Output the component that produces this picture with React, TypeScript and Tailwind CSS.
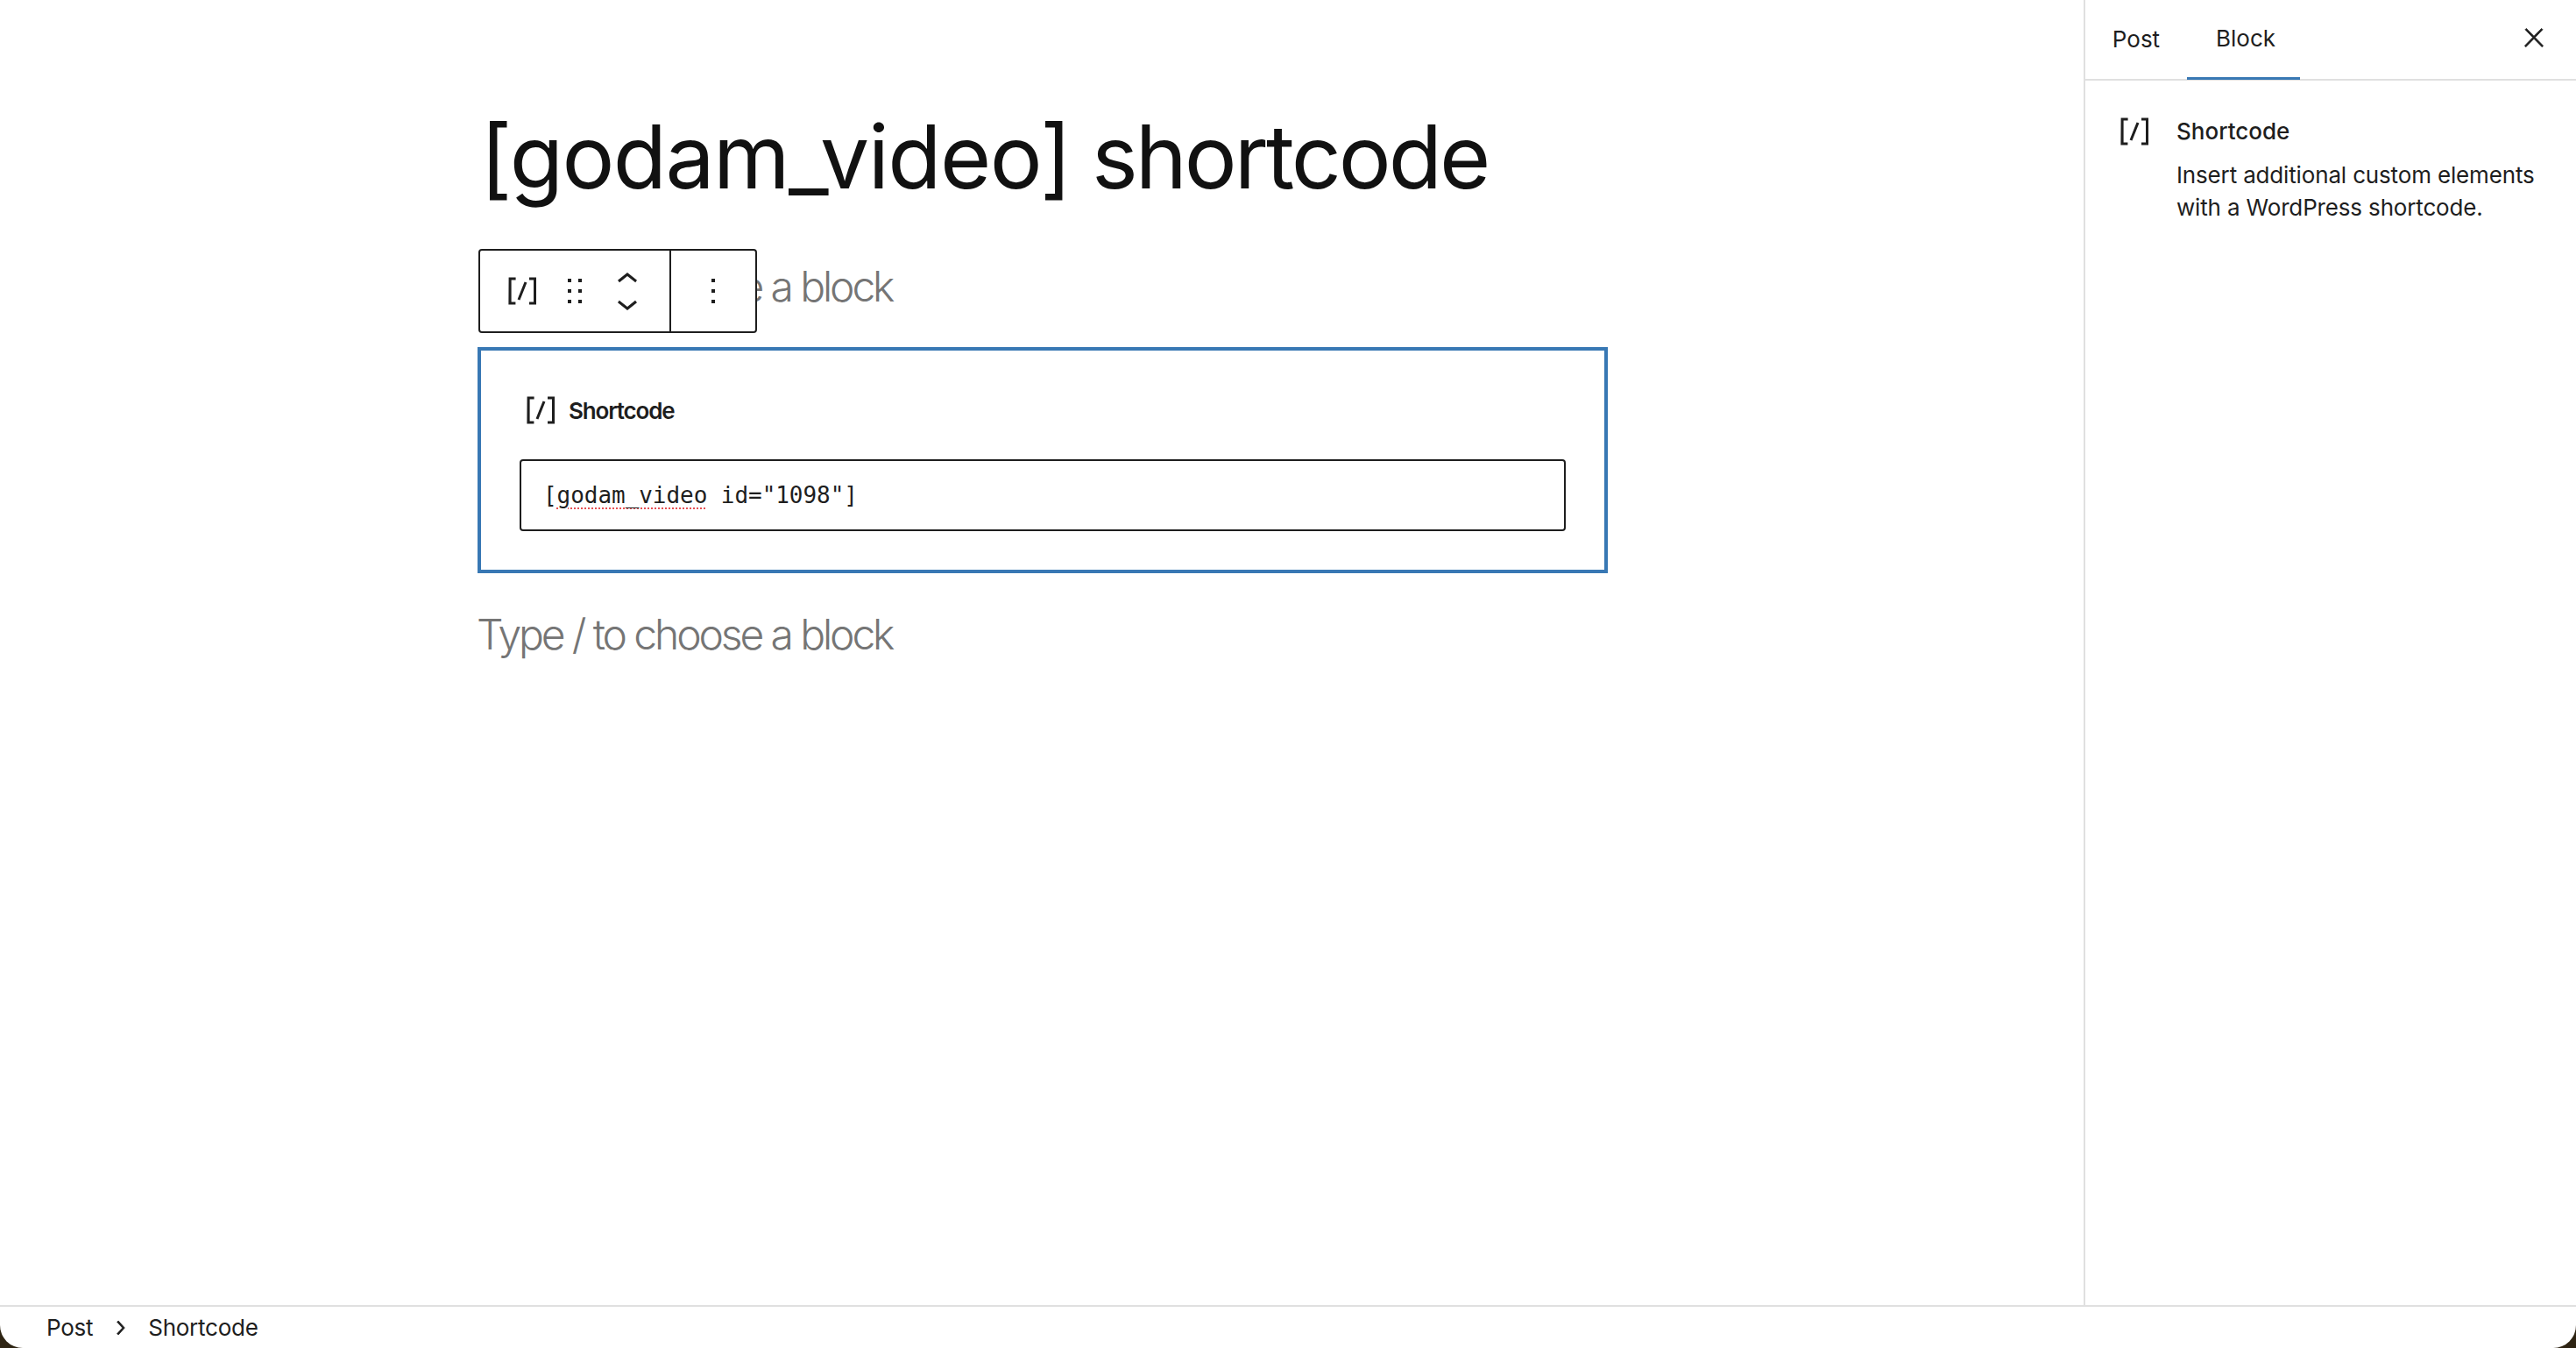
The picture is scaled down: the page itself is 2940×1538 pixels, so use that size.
import type { ReactNode } from 'react'

const SHORTCODE = 'M16 4.2v1.5h2.5v12.5H16v1.5h4V4.2h-4zM4.2 19.8h4v-1.5H5.8V5.8h2.5V4.2h-4l-.1 15.6zm5.1-3.1l1.4.6 4-10-1.4-.6-4 10z'
const DRAG = 'M8 7h2V5H8v2zm0 6h2v-2H8v2zm0 6h2v-2H8v2zm6-14v2h2V5h-2zm0 8h2v-2h-2v2zm0 6h2v-2h-2v2z'
const MORE = 'M13 19h-2v-2h2v2zm0-6h-2v-2h2v2zm0-6h-2V5h2v2z'
const UP = 'M6.5 12.4L12 8l5.5 4.4-.9 1.2L12 10l-4.5 3.6-1-1.2z'
const DOWN = 'M17.5 11.6L12 16l-5.5-4.4.9-1.2L12 14l4.5-3.6 1 1.2z'
const CLOSE = 'M13 11.8l6.1-6.3-1-1-6.1 6.2-6.1-6.2-1 1 6.1 6.3-6.5 6.7 1 1 6.5-6.6 6.5 6.6 1-1z'
const CHEVRON = 'M10.6 6L9.4 7l4.6 5-4.6 5 1.2 1 5.4-6z'

function Icon({ d, className, stroke }: { d: string; className?: string; stroke?: boolean }) {
  return (
    <svg
      viewBox="0 0 24 24"
      className={className ?? 'w-12 h-12'}
      fill="#1e1e1e"
      stroke={stroke ? '#1e1e1e' : undefined}
      strokeWidth={stroke ? 0.5 : undefined}
    >
      <path d={d} />
    </svg>
  )
}

function Placeholder({ children }: { children: ReactNode }) {
  return (
    <p className="-ml-px text-[48px] leading-[72px] font-light tracking-[-0.065em] text-[#757575]">{children}</p>
  )
}

export default function App() {
  return (
    <div className="w-full h-screen overflow-hidden bg-[#2e2413]">
      <div className="relative flex flex-col w-full h-full overflow-hidden rounded-b-[26px] bg-white text-[#1e1e1e] font-['Inter',sans-serif]">
        <div className="flex flex-1 min-h-0">
          {/* Editor canvas */}
          <main className="relative flex-1 pl-[545px] pt-[116px]">
            <h1 className="ml-[3px] text-[100px] leading-[126px] font-normal text-[#111111] whitespace-nowrap">
              <span className="tracking-[-0.016em]">[godam_video]</span>
              <span className="tracking-[-0.04em]"> </span>
              <span className="tracking-[-0.03em]">shortcode</span>
            </h1>
            <div className="mt-[49px]">
              <Placeholder>Type / to choose a block</Placeholder>
            </div>

            {/* Block toolbar */}
            <div className="absolute left-[546px] top-[284px] flex w-[318px] h-[96px] bg-white border-2 border-[#1e1e1e] rounded-[4px]">
              <div className="flex items-center w-[218px] border-r-2 border-[#1e1e1e] pl-[24px]">
                <Icon d={SHORTCODE} />
                <Icon d={DRAG} className="w-12 h-12 ml-[12px]" />
                <div className="flex flex-col ml-[12px]">
                  <Icon d={UP} />
                  <Icon d={DOWN} className="w-12 h-12 -mt-[21px]" />
                </div>
              </div>
              <div className="flex items-center justify-center flex-1">
                <Icon d={MORE} />
              </div>
            </div>

            {/* Shortcode block */}
            <div className="w-[1290px] h-[258px] mt-[33px] border-4 border-[#3878b4] pl-[44px] pr-[44px] pt-[44px]">
              <div className="flex items-center h-[48px]">
                <Icon d={SHORTCODE} />
                <span className="ml-[8px] text-[26px] font-semibold tracking-[-0.045em] text-[#1e1e1e]">Shortcode</span>
              </div>
              <div className="flex items-center h-[82px] mt-[32px] px-[25px] border-2 border-[#1e1e1e] rounded-[4px] font-['DejaVu_Sans_Mono',monospace] text-[26px] tracking-[-0.05px] whitespace-pre">
                [<span className="underline decoration-dotted decoration-[#e65054] decoration-2 underline-offset-[6px]">godam_video</span> id="1098"]
              </div>
            </div>

            <div className="mt-[34px]">
              <Placeholder>Type / to choose a block</Placeholder>
            </div>
          </main>

          {/* Settings sidebar */}
          <aside className="w-[562px] shrink-0 border-l-2 border-[#e0e0e0]">
            <div className="relative flex items-center h-[92px] border-b-2 border-[#e0e0e0] text-[26px]">
              <div className="flex items-center justify-center w-[116px] h-full pb-[2px]">Post</div>
              <div className="flex items-center justify-center w-[129px] h-full pl-[5px] pb-[2px] -mb-[2px] border-b-[3px] border-[#3878b4]">Block</div>
              <button className="absolute right-[31px] top-[26px]">
                <Icon d={CLOSE} className="w-[34px] h-[34px]" stroke />
              </button>
            </div>
            <div className="flex pl-[32px] pt-[34px] pr-[40px]">
              <Icon d={SHORTCODE} className="w-12 h-12 shrink-0" />
              <div className="ml-[24px] pt-[6px]">
                <h2 className="text-[26px] leading-[36px] font-medium">Shortcode</h2>
                <p className="mt-[13px] text-[26px] leading-[37px] tracking-[-0.006em] whitespace-nowrap">
                  Insert additional custom elements
                  <br />
                  with a WordPress shortcode.
                </p>
              </div>
            </div>
          </aside>
        </div>

        {/* Breadcrumb bar */}
        <footer className="flex items-center h-[49px] shrink-0 border-t-2 border-[#e0e0e0] pl-[53px] text-[26px] tracking-[-0.01em]">
          <span>Post</span>
          <Icon d={CHEVRON} className="w-[32px] h-[32px] ml-[15px]" stroke />
          <span className="ml-[16px]">Shortcode</span>
        </footer>
      </div>
    </div>
  )
}
